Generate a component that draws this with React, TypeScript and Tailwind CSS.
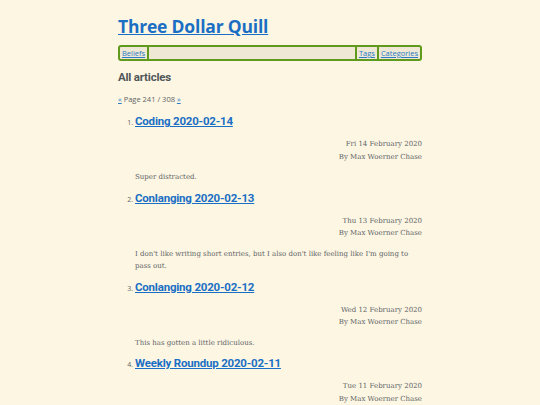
import React from 'react';

const posts = [
  {
    title: 'Coding 2020-02-14',
    date: 'Fri 14 February 2020',
    excerpt: 'Super distracted.',
  },
  {
    title: 'Conlanging 2020-02-13',
    date: 'Thu 13 February 2020',
    excerpt: "I don't like writing short entries, but I also don't like feeling like I'm going to pass out.",
  },
  {
    title: 'Conlanging 2020-02-12',
    date: 'Wed 12 February 2020',
    excerpt: 'This has gotten a little ridiculous.',
  },
  {
    title: 'Weekly Roundup 2020-02-11',
    date: 'Tue 11 February 2020',
    excerpt: '',
  },
];

const heading = "font-['Open_Sans','Noto_Sans',sans-serif]";
const narrow = "font-['Roboto','Open_Sans',sans-serif]";
const body = "font-['DejaVu_Serif','Liberation_Serif',serif]";

export default function App() {
  return (
    <div className="min-h-screen bg-[#fdf6e3] text-[#5e6567]">
      <div className="mx-auto w-[304px] pt-[13px]">
        <h1 className={`${heading} text-[17.5px] font-bold leading-[26px] tracking-[-0.2px]`}>
          <a href="#" className="text-[#1a6fc4] underline">
            Three Dollar Quill
          </a>
        </h1>

        <nav
          className={`${heading} mt-[6px] flex h-[16px] items-stretch rounded-[3px] border-2 border-[#5f9a1c] bg-[#eee8d5] text-[7.5px] leading-[12px]`}
        >
          <a href="#" className="border-r-2 border-[#5f9a1c] px-[2px] text-[#2a7bc4] underline">
            Beliefs
          </a>
          <div className="flex-1" />
          <a href="#" className="border-l-2 border-[#5f9a1c] px-[2px] text-[#2a7bc4] underline">
            Tags
          </a>
          <a href="#" className="border-l-2 border-[#5f9a1c] px-[2px] text-[#2a7bc4] underline">
            Categories
          </a>
        </nav>

        <h2 className={`${narrow} mt-[7px] text-[11.5px] font-bold leading-[18px] tracking-[-0.2px] text-[#4f5759]`}>
          All articles
        </h2>

        <p className={`${heading} mt-[7px] text-[7.5px] leading-[12px]`}>
          <a href="#" className="text-[#2a7bc4] underline">«</a> Page 241 / 308{' '}
          <a href="#" className="text-[#2a7bc4] underline">»</a>
        </p>

        <ol className="mt-[7px] list-decimal pl-[17px]">
          {posts.map((post) => (
            <li key={post.title} className={`${heading} mb-[5px] text-[7px]`}>
              <h3 className={`${narrow} text-[11.5px] font-bold leading-[18px] tracking-[-0.2px]`}>
                <a href="#" className="text-[#1a6fc4] underline">
                  {post.title}
                </a>
              </h3>
              <div className={`${body} mt-[8px] text-right text-[7px] leading-[12.5px]`}>
                <div>{post.date}</div>
                <div>By Max Woerner Chase</div>
              </div>
              {post.excerpt && (
                <p className={`${body} mt-[8px] text-[7px] leading-[12.5px]`}>{post.excerpt}</p>
              )}
            </li>
          ))}
        </ol>
      </div>
    </div>
  );
}
